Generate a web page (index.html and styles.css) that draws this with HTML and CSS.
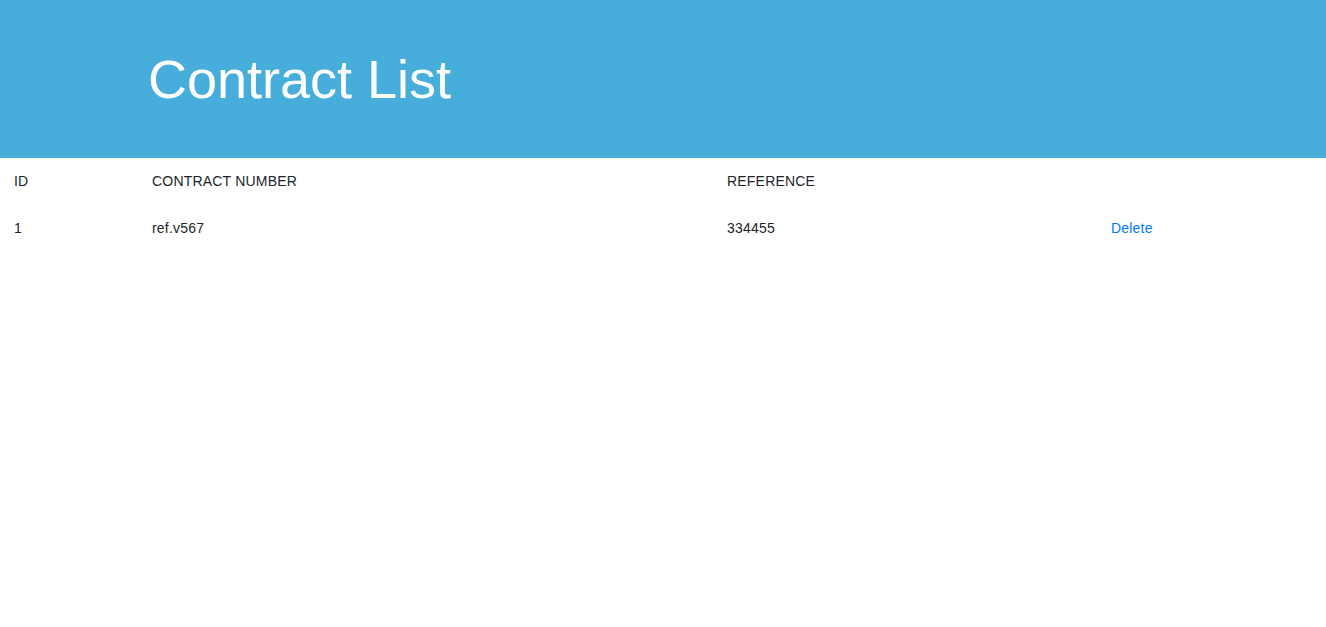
FILE: index.html
```html
<!DOCTYPE html>
<html lang="en">
<head>
<meta charset="utf-8">
<title>Contract List</title>
<link rel="stylesheet" href="styles.css">
</head>
<body>
<header class="hero">
  <h1 class="hero-title">Contract List</h1>
</header>
<table class="contracts">
  <colgroup>
    <col class="col-id">
    <col class="col-number">
    <col class="col-ref">
    <col class="col-action">
  </colgroup>
  <thead>
    <tr>
      <th>ID</th>
      <th>Contract Number</th>
      <th>Reference</th>
      <th></th>
    </tr>
  </thead>
  <tbody>
    <tr>
      <td>1</td>
      <td>ref.v567</td>
      <td>334455</td>
      <td><a class="delete-link" href="#">Delete</a></td>
    </tr>
  </tbody>
</table>
</body>
</html>
```
FILE: styles.css
```css
* { box-sizing: border-box; }
html, body {
  margin: 0;
  padding: 0;
  background: #fff;
  font-family: "Liberation Sans", Arial, sans-serif;
  color: #212529;
}
.hero {
  background: #47aedb;
  height: 158px;
  padding: 47px 0 0 148px;
}
.hero-title {
  margin: 0;
  font-size: 54px;
  font-weight: 400;
  line-height: 1.2;
  color: #fff;
}
.contracts {
  width: 100%;
  border-collapse: collapse;
  table-layout: fixed;
  font-size: 14px;
  line-height: 21px;
  letter-spacing: 0.2px;
}
.col-id { width: 140px; }
.col-number { width: 575px; }
.col-ref { width: 384px; }
.col-action { width: auto; }
.contracts th,
.contracts td {
  padding: 13px 12px 11px;
  text-align: left;
  vertical-align: top;
}
.contracts th:first-child,
.contracts td:first-child {
  padding-left: 14px;
}
.contracts th {
  font-weight: 400;
  text-transform: uppercase;
  border-bottom: 2px solid #fff;
}
.delete-link {
  color: #007bff;
  text-decoration: none;
}
```
